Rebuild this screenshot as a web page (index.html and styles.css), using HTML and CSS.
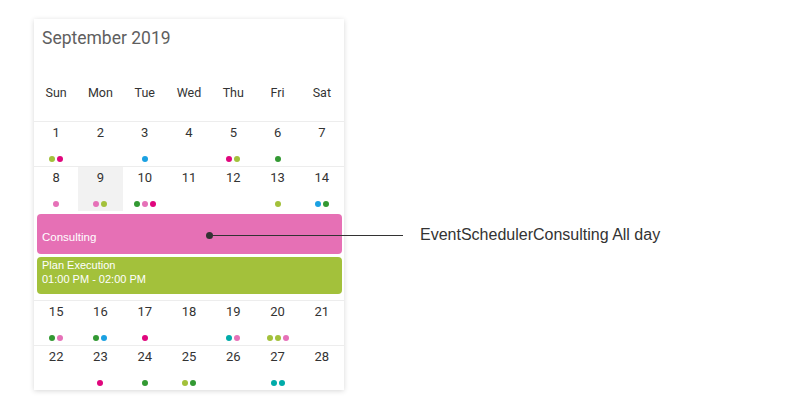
FILE: index.html
```html
<!DOCTYPE html>
<html>
<head>
<meta charset="utf-8">
<link rel="stylesheet" href="styles.css">
</head>
<body>
<div class="stage">
  <div class="card">
    <div class="title">September 2019</div>
    <div class="weekdays">
      <span>Sun</span><span>Mon</span><span>Tue</span><span>Wed</span><span>Thu</span><span>Fri</span><span>Sat</span>
    </div>
    <div class="week">
      <div class="day"><div class="num">1</div><div class="dots"><i class="lime"></i><i class="magenta"></i></div></div>
      <div class="day"><div class="num">2</div><div class="dots"></div></div>
      <div class="day"><div class="num">3</div><div class="dots"><i class="blue"></i></div></div>
      <div class="day"><div class="num">4</div><div class="dots"></div></div>
      <div class="day"><div class="num">5</div><div class="dots"><i class="magenta"></i><i class="lime"></i></div></div>
      <div class="day"><div class="num">6</div><div class="dots"><i class="green"></i></div></div>
      <div class="day"><div class="num">7</div><div class="dots"></div></div>
    </div>
    <div class="week">
      <div class="day"><div class="num">8</div><div class="dots"><i class="pink"></i></div></div>
      <div class="day selected"><div class="num">9</div><div class="dots"><i class="pink"></i><i class="lime"></i></div></div>
      <div class="day"><div class="num">10</div><div class="dots"><i class="green"></i><i class="pink"></i><i class="magenta"></i></div></div>
      <div class="day"><div class="num">11</div><div class="dots"></div></div>
      <div class="day"><div class="num">12</div><div class="dots"></div></div>
      <div class="day"><div class="num">13</div><div class="dots"><i class="lime"></i></div></div>
      <div class="day"><div class="num">14</div><div class="dots"><i class="blue"></i><i class="green"></i></div></div>
    </div>
    <div class="agenda">
      <div class="event consulting">Consulting</div>
      <div class="event plan">
        <div>Plan Execution</div>
        <div>01:00 PM - 02:00 PM</div>
      </div>
    </div>
    <div class="week bordered">
      <div class="day"><div class="num">15</div><div class="dots"><i class="green"></i><i class="pink"></i></div></div>
      <div class="day"><div class="num">16</div><div class="dots"><i class="green"></i><i class="blue"></i></div></div>
      <div class="day"><div class="num">17</div><div class="dots"><i class="magenta"></i></div></div>
      <div class="day"><div class="num">18</div><div class="dots"></div></div>
      <div class="day"><div class="num">19</div><div class="dots"><i class="teal"></i><i class="pink"></i></div></div>
      <div class="day"><div class="num">20</div><div class="dots"><i class="lime"></i><i class="lime"></i><i class="pink"></i></div></div>
      <div class="day"><div class="num">21</div><div class="dots"></div></div>
    </div>
    <div class="week">
      <div class="day"><div class="num">22</div><div class="dots"></div></div>
      <div class="day"><div class="num">23</div><div class="dots"><i class="magenta"></i></div></div>
      <div class="day"><div class="num">24</div><div class="dots"><i class="green"></i></div></div>
      <div class="day"><div class="num">25</div><div class="dots"><i class="lime"></i><i class="green"></i></div></div>
      <div class="day"><div class="num">26</div><div class="dots"></div></div>
      <div class="day"><div class="num">27</div><div class="dots"><i class="teal"></i><i class="teal"></i></div></div>
      <div class="day"><div class="num">28</div><div class="dots"></div></div>
    </div>
  </div>
  <div class="callout">
    <span class="marker"></span>
    <span class="leader"></span>
    <span class="label">EventSchedulerConsulting All day</span>
  </div>
</div>
</body>
</html>
```

FILE: styles.css
```css
html, body {
  margin: 0;
  padding: 0;
  background: #ffffff;
}

.stage {
  position: relative;
  width: 800px;
  height: 411px;
  padding: 19px 0 0 34px;
  box-sizing: border-box;
}

.card {
  width: 310px;
  height: 371px;
  background: #ffffff;
  box-shadow: 0 1px 5px rgba(0, 0, 0, 0.16);
  font-family: Roboto, "Noto Sans", sans-serif;
  color: #333333;
  display: flex;
  flex-direction: column;
}

.title {
  padding: 7px 0 0 8px;
  font-size: 17.5px;
  line-height: 24px;
  color: #5f5f5f;
}

.weekdays {
  display: grid;
  grid-template-columns: repeat(7, 1fr);
  padding: 35px 0 20px;
  font-size: 12.5px;
  line-height: 16px;
  text-align: center;
  color: #333333;
}

.week {
  display: grid;
  grid-template-columns: repeat(7, 1fr);
  border-top: 1px solid #ededed;
}

.day {
  height: 44px;
  display: flex;
  flex-direction: column;
  align-items: center;
}

.day.selected {
  background: #f2f2f2;
}

.num {
  padding-top: 3px;
  font-size: 13px;
  line-height: 16px;
  color: #333333;
}

.dots {
  margin-top: 15px;
  height: 6px;
  display: flex;
  gap: 2px;
}

.dots i {
  display: block;
  width: 6px;
  height: 6px;
  border-radius: 50%;
}

.lime { background: #a3c13b; }
.magenta { background: #e0067d; }
.blue { background: #1ba1e2; }
.green { background: #339933; }
.pink { background: #e671b8; }
.teal { background: #00aba9; }

.agenda {
  padding: 3px 2px 6px 3px;
  display: flex;
  flex-direction: column;
  gap: 3px;
}

.event {
  border-radius: 4px;
  color: #ffffff;
  font-family: "Liberation Sans", Arial, sans-serif;
  padding-left: 5px;
  box-sizing: border-box;
}

.consulting {
  height: 40px;
  background: #e670b5;
  font-size: 11.5px;
  line-height: 14px;
  padding-top: 16px;
}

.plan {
  height: 37px;
  background: #a3c13b;
  font-size: 11px;
  line-height: 14px;
  padding-top: 1px;
}

.callout {
  position: absolute;
  left: 206px;
  top: 224px;
  width: 480px;
  height: 22px;
  display: flex;
  align-items: center;
}

.marker {
  width: 7px;
  height: 7px;
  border-radius: 50%;
  background: #333333;
  flex: none;
}

.leader {
  width: 191px;
  height: 1px;
  background: #333333;
  flex: none;
  margin-left: -1px;
}

.label {
  margin-left: 17px;
  font-family: "Liberation Sans", Arial, sans-serif;
  font-size: 16px;
  color: #333333;
  white-space: nowrap;
}
```
